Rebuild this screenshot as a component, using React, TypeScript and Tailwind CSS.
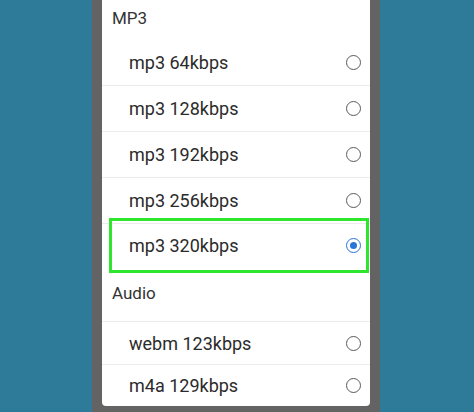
import React from "react";

function Radio({ checked }: { checked?: boolean }) {
  if (checked) {
    return (
      <div className="w-[15px] h-[15px] rounded-full border-[1.5px] border-[#2a74d8] flex items-center justify-center">
        <div className="w-[7px] h-[7px] rounded-full bg-[#2a74d8]" />
      </div>
    );
  }
  return <div className="w-[15px] h-[15px] rounded-full border-[1.5px] border-[#5a5a5a]" />;
}

function Row({ label, checked, border = true, highlight, h = "h-[46px]" }: { label: string; checked?: boolean; border?: boolean; highlight?: boolean; h?: string }) {
  return (
    <div className={`relative shrink-0 flex items-center justify-between pl-[27px] pr-[9px] ${h} ${border ? "border-b border-[#ececec]" : ""} ${highlight ? "pb-[3px]" : ""}`}>
      <span className="text-[18px] text-[#2b2b2b]">{label}</span>
      <Radio checked={checked} />
      {highlight && (
        <div className="absolute top-[-6px] bottom-[-3px] left-[7px] right-[1px] border-[3px] border-[#2ee62e]" />
      )}
    </div>
  );
}

export default function App() {
  return (
    <div className="w-[474px] h-[412px] flex bg-[#2e7a99] overflow-hidden" style={{ fontFamily: "Roboto, 'Noto Sans', sans-serif" }}>
      <div className="w-[92px] h-full bg-[#2e7a99]" />
      <div className="w-[288px] h-full bg-[#636363] px-[10px]">
        <div className="bg-white h-[406px] rounded-b-[4px] flex flex-col overflow-hidden">
          <div className="shrink-0 h-[40px] pl-[10px] pt-[6px] text-[17px] text-[#333]">MP3</div>
          <Row label="mp3 64kbps" />
          <Row label="mp3 128kbps" />
          <Row label="mp3 192kbps" />
          <Row label="mp3 256kbps" />
          <Row label="mp3 320kbps" checked border={false} highlight />
          <div className="shrink-0 h-[52px] pl-[10px] pt-[11px] text-[17px] text-[#333] border-b border-[#ececec]">Audio</div>
          <Row label="webm 123kbps" h="h-[43px]" />
          <Row label="m4a 129kbps" border={false} h="h-[41px]" />
        </div>
      </div>
      <div className="flex-1 h-full bg-[#2e7a99]" />
    </div>
  );
}
